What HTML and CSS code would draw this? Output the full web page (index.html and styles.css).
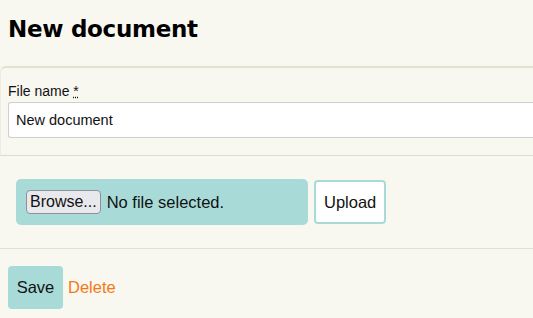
FILE: index.html
```html
<!DOCTYPE html>
<html lang="en">
<head>
  <meta charset="UTF-8" />
  <meta name="viewport" content="width=device-width, initial-scale=1.0"/>
  <title>New document</title>
  <link rel="stylesheet" href="styles.css">
</head>
<body>
  <h1>New document</h1>

  <!-- file name -->
  <div class="panel">
    <label class="field-label" for="nameInput">File name <abbr title="required">*</abbr></label>
    <input id="nameInput" class="text-input" value="New document" />
  </div>

  <!-- upload -->
  <div class="upload-row">
    <div class="file-box">
      <button class="browse-btn" type="button">Browse...</button>
      <span class="file-status">No file selected.</span>
    </div>
    <button class="upload-btn" type="button">Upload</button>
  </div>

  <!-- actions -->
  <div class="actions">
    <button class="save-btn" type="button">Save</button>
    <a class="delete-link" href="#">Delete</a>
  </div>
</body>
</html>
```

FILE: styles.css
```css
body {
  font-family: "Liberation Sans", Arial, sans-serif;
  font-size: 16.5px;
  color: #111;
  background: #f8f8f0;
  margin: 0;
  padding: 0 8px;
  overflow: hidden;
}
h1 {
  font-family: "DejaVu Sans", sans-serif;
  font-weight: bold;
  font-size: 23px;
  line-height: 30px;
  color: #000;
  margin: 0;
  padding-top: 14px;
  margin-bottom: 22px;
  letter-spacing: -0.3px;
}
.panel {
  margin: 0 -8px;
  padding: 14px 0 17px 7px;
  border-top: 2px solid #e2e2cf;
  border-left: 1px solid #ecece0;
  border-bottom: 1px solid #dcdccc;
  border-radius: 6px 0 0 0;
}
.field-label {
  display: block;
  font-size: 14px;
  line-height: 18px;
  margin-bottom: 2px;
}
.field-label abbr {
  text-decoration: underline dotted;
}
.text-input {
  display: block;
  width: 100%;
  height: 36px;
  box-sizing: border-box;
  padding: 0 7px;
  border: 1px solid #cfcfcf;
  border-right: none;
  border-radius: 3px 0 0 3px;
  background: #fff;
  font: inherit;
  font-size: 14.5px;
  color: #111;
}
.upload-row {
  display: flex;
  align-items: center;
  gap: 6px;
  padding: 23px 0 23px 16px;
  margin: 0 -8px;
  border-bottom: 1px solid #e0e0d2;
}
.file-box {
  display: flex;
  align-items: center;
  gap: 6px;
  width: 292px;
  height: 46px;
  box-sizing: border-box;
  padding: 0 10px;
  background: #a8dbd8;
  border-radius: 5px;
}
.browse-btn {
  height: 24px;
  padding: 0 3px;
  background: #e9e9ed;
  border: 1px solid #8f8f9d;
  border-radius: 4px;
  font: inherit;
  font-size: 16px;
  color: #111;
}
.upload-btn {
  height: 44px;
  padding: 0 8px;
  background: #fff;
  border: 2px solid #a8dbd8;
  border-radius: 4px;
  font: inherit;
  color: #111;
}
.actions {
  display: flex;
  align-items: center;
  gap: 5px;
  padding-top: 17px;
}
.save-btn {
  height: 43px;
  width: 55px;
  padding: 0;
  background: #a8dbd8;
  border: none;
  border-radius: 4px;
  font: inherit;
  color: #111;
}
.delete-link {
  color: #f57816;
  text-decoration: none;
}
```
